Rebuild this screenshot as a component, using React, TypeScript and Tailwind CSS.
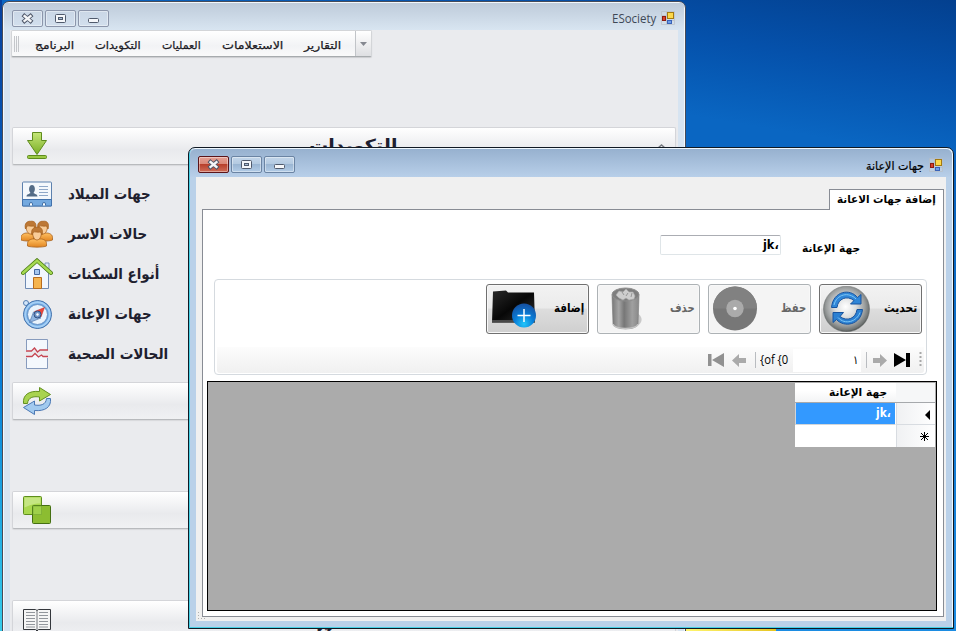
import { useLayoutEffect, useRef, useState } from "react";
import type { ReactNode } from "react";

const FONT = "font-['DejaVu_Sans','Noto_Sans',sans-serif]";

// A single-line label that is condensed or stretched to its column width.
function Label({ w, dir = "rtl", className = "", children }: { w: number; dir?: "rtl" | "ltr"; className?: string; children: ReactNode }) {
  const ref = useRef<HTMLSpanElement>(null);
  const [k, setK] = useState(1);
  useLayoutEffect(() => {
    if (ref.current) setK(w / ref.current.offsetWidth);
  }, [w]);
  return (
    <div dir="ltr" className={`shrink-0 whitespace-nowrap ${className}`} style={{ width: w }}>
      <span ref={ref} dir={dir} className="inline-block origin-left align-top" style={{ transform: `scaleX(${k})` }}>{children}</span>
    </div>
  );
}

function CaptionButton({ kind, active = false, dim = false }: { kind: "close" | "max" | "min"; active?: boolean; dim?: boolean }) {
  const tone = active
    ? "border-[#5b1419] bg-linear-to-b from-[#e5a094] via-[#d67f70] via-45% to-[#c8604f] bg-[linear-gradient(#e5a094,#da8878_45%,#b8402c_50%,#cf6d58)]"
    : dim
      ? "border-[#8c96ab] bg-linear-to-b from-[#cad7e6] to-[#d2dfed]"
      : "border-[#6b84a3] bg-[linear-gradient(#c3d6ea,#b4cae1_45%,#9bb6d3_50%,#b2cce7)]";
  return (
    <div className={`flex h-[17px] w-[31px] items-center justify-center rounded-[2px] border shadow-[inset_0_0_0_1px_#ffffff66] ${tone}`}>
      <svg width="13" height="11" viewBox="0 0 13 11" fill="none">
        {kind === "close" && (
          <g strokeLinecap="square">
            <path d="M3.500 3l6 5M9.500 3l-6 5" stroke="#4e5668" strokeWidth="4.200" />
            <path d="M3.500 3l6 5M9.500 3l-6 5" stroke="#f4f6f8" strokeWidth="2.300" />
          </g>
        )}
        {kind === "max" && (
          <g stroke="#505a6c">
            <rect x="1.500" y="1.500" width="10" height="8" rx="1" fill="#f5f7fa" />
            <rect x="4.500" y="4.500" width="4" height="2" fill="#a9bfd6" />
          </g>
        )}
        {kind === "min" && <rect x="1.500" y="5.500" width="10" height="4" rx="1" fill="#f5f7fa" stroke="#505a6c" />}
      </svg>
    </div>
  );
}

function FormIcon() {
  return (
    <svg width="14" height="14" viewBox="0 0 14 14">
      <path d="M.5 .5h13v13H.5zM.5 4.500h5M5.500 .5v13M5.500 9.500h8" fill="#d8dde3" fillOpacity=".5" stroke="#b9bfc6" opacity=".7" />
      <rect x="1.500" y="5.500" width="3" height="4" fill="#d8402a" stroke="#8d1c12" />
      <rect x="6.500" y="1.500" width="6" height="6" fill="#fbd84a" stroke="#a47a10" />
      <rect x="6.500" y="9.500" width="4" height="3" fill="#6f9fe8" stroke="#3a63b8" />
    </svg>
  );
}

const Contact = () => (
  <svg width="32" height="28" viewBox="0 0 32 28">
    <rect x="1.500" y="2" width="29" height="24" rx="1" fill="#f4f8fc" stroke="#5d81ae" />
    <path d="M1.500 19.500h29V26h-29z" fill="#74a9df" stroke="#4272ac" />
    <path d="M5.500 16.500c0-2.500 3-2.500 4-3.500-2.500-3-1.500-8 1.500-8s4 5 1.500 8c1 1 4 1 4 3.500z" fill="#536b86" />
    <path d="M18 6.500h9M18 9.500h9M18 12.500h9M18 15.500h9" stroke="#8fa8c8" />
    <path d="M8.500 25.500V24a1.500 1.500 0 0 1 3 0v1.500M21.500 25.500V24a1.500 1.500 0 0 1 3 0v1.500" fill="#fff" stroke="#3f6ea5" />
  </svg>
);

const Head = ({ x, y }: { x: number; y: number }) => (
  <g transform={`translate(${x} ${y})`} stroke="#a86320" strokeWidth=".8">
    <path d="M-6.500 19v-2.500c0-3 3-4.500 6-4.500h7c3 0 6 1.500 6 4.500V19c-3 1.500-16 1.500-19 0z" fill="url(#body)" />
    <path d="M-1.500 5c0 4.500 2 8 4.500 8s4.500-3.500 4.500-8" fill="#f8cc98" />
    <path d="M-2 8C-3.500 2 0 0 3 .3 7-.3 9.500 2 8 8L6.500 5C3 5.500 1 4.500-.5 5z" fill="#bd7835" />
  </g>
);
const People = () => (
  <svg width="32" height="28" viewBox="0 0 32 28">
    <defs><linearGradient id="body" x1="0" y1="0" x2="0" y2="1"><stop stopColor="#ffc062" /><stop offset="1" stopColor="#e18420" /></linearGradient></defs>
    <Head x={6.500} y={1} /><Head x={19} y={1} /><Head x={13} y={7} />
  </svg>
);

const House = () => (
  <svg width="32" height="32" viewBox="0 0 32 32">
    <path d="M24 5h4v10h-4z" fill="#dfe8f4" stroke="#7f97bb" />
    <path d="M4.500 15L16 4l11.500 11v15.500h-23z" fill="#f1f6fd" stroke="#6f8bb4" />
    <path d="M2 15L16 2.500 30 15" fill="none" stroke="#507e18" strokeWidth="4" strokeLinecap="round" />
    <path d="M2 15L16 2.500 30 15" fill="none" stroke="#a5da51" strokeWidth="2.400" strokeLinecap="round" />
    <path d="M13.500 11.500h5v5h-5z" fill="#a5c6ef" stroke="#4568a0" />
    <path d="M12.500 19.500h8v11h-8z" fill="#f5b44f" stroke="#b86d20" />
  </svg>
);

const Compass = () => (
  <svg width="32" height="32" viewBox="0 0 32 32">
    <circle cx="5" cy="5" r="2.500" fill="#d2e6fa" stroke="#557eb2" />
    <circle cx="16.500" cy="16.500" r="14" fill="#6ba5e0" stroke="#416fa9" />
    <circle cx="16.500" cy="16.500" r="12.200" fill="none" stroke="#a5cff5" strokeWidth="2" />
    <circle cx="16.500" cy="16.500" r="10" fill="#eaf3fc" stroke="#6992c4" />
    <path d="M23.500 9.500L20 19l-6.500-5.500z" fill="#e9473b" stroke="#c9291f" strokeWidth=".5" />
    <path d="M8.500 24.500L12.500 14l7.500 6z" fill="#91b5e1" stroke="#45699f" strokeWidth=".6" />
    <circle cx="16.500" cy="16.500" r="3.500" fill="#7194c7" stroke="#2f4e80" />
    <circle cx="16.500" cy="16.500" r="1.200" fill="#fff" />
  </svg>
);

const Health = () => (
  <svg width="32" height="32" viewBox="0 0 32 32">
    <path d="M5.500 1.500h21v11H19L16.500 15l-3-3.500-2 2h-6z" fill="#f4f8fd" />
    <path d="M5.500 18.500h6l3-3.500 3 4 3-2.500 1.500 2h4.500v12h-21z" fill="#f4f8fd" />
    <path d="M5.500 12V1.500h21V12M5.500 20v10.500h21V20" fill="none" stroke="#879bbd" />
    <path d="M5 13h5.500l3-3 3 4 2.500-2h8M5 18.500h6l3-3 3.500 3.500 3-2 1.500 1.500h5" fill="none" stroke="#c64552" strokeWidth="1.300" />
  </svg>
);

const Download = () => (
  <svg width="24" height="30" viewBox="0 0 24 30" stroke="#5e8b1d">
    <defs><linearGradient id="lime" x1="0" y1="0" x2="0" y2="1"><stop stopColor="#c6e778" /><stop offset="1" stopColor="#79ad25" /></linearGradient></defs>
    <path d="M7.500 .5h9v8h5L12 22.500 2.500 8.500h5z" fill="url(#lime)" />
    <rect x="2.500" y="23.500" width="19" height="3" rx="1" fill="#9ac844" />
  </svg>
);

const Sync = () => (
  <svg width="30" height="30" viewBox="0 0 30 30" strokeLinejoin="round">
    <path d="M1.500 17.500C.5 9 7 4.500 17.500 5.500v-4l11 7-11 6.500v-4C11 10 6 11.500 5.500 17.500z" fill="#a8d34f" stroke="#63901f" />
    <path d="M28.500 12.500C29.500 21 23 25.500 12.500 24.500v4L1.500 21.500l11-6.500v4C19 20 24 18.500 24.500 12.500z" fill="#a2caef" stroke="#4b78b4" />
  </svg>
);

const Squares = () => (
  <svg width="30" height="30" viewBox="0 0 30 30">
    <rect x="1.500" y="1.500" width="18" height="18" rx="1" fill="#a9d84f" stroke="#5d8d1c" />
    <path d="M2.500 2.500h16v6c-7 0-11 2-16 4z" fill="#c5e683" />
    <rect x="10.500" y="10.500" width="18" height="18" rx="1" fill="#8cbd31" stroke="#446f12" />
    <path d="M11 11h8.500v8.500H11z" fill="#9fd04b" stroke="#79a935" strokeWidth=".7" />
  </svg>
);

const Book = () => (
  <svg width="30" height="24" viewBox="0 0 30 24" fill="none">
    <path d="M1.500 1.500h12l1.500 1 1.500-1h12v20h-12L15 23l-1.500-1.500h-12z" fill="#f5f5f5" stroke="#34373c" />
    <path d="M15 2v20" stroke="#73777c" />
    <path d="M4 4.500h9M4 7.500h9M4 10.500h9M4 13.500h9M4 16.500h9M4 19h9M17 4.500h9M17 7.500h9M17 10.500h9M17 13.500h9M17 16.500h9M17 19h9" stroke="#92969c" />
  </svg>
);

const Refresh = () => (
  <svg width="48" height="46" viewBox="0 0 48 46">
    <defs><radialGradient id="orb" cx=".48" cy=".45" r=".56"><stop stopColor="#fff" /><stop offset=".4" stopColor="#dcdedf" /><stop offset=".75" stopColor="#9b9e9e" /><stop offset=".92" stopColor="#707473" /><stop offset="1" stopColor="#3f4443" /></radialGradient></defs>
    <ellipse cx="23.500" cy="23" rx="23" ry="22.800" fill="url(#orb)" stroke="#656968" strokeWidth=".5" />
    <path d="M8.500 21.500C10 5 27 2 34.500 11.500L38 8.500v9.500H27.500l3.500-3.500c-7-5.500-16-2-17 7z" fill="#2f86d8" stroke="#17539e" />
    <path d="M39.500 23.500C38 39 21 42 13.500 33.500L10 36.500v-10h10.500L17 30.500c7 5.500 16 2 17-7z" fill="#2b80d2" stroke="#17539e" />
    <path d="M11 19C13.500 8 26 5.500 33 13M37 26.500c-3 9-15 13-22 5" fill="none" stroke="#7ec7f5" />
  </svg>
);

const Disc = () => (
  <svg width="46" height="46" viewBox="0 0 46 46">
    <circle cx="23" cy="22.500" r="22" fill="#777" />
    <path d="M1 22.500a22 22 0 0 1 44 0l-22 0z" fill="#818181" />
    <circle cx="23" cy="22.500" r="8.700" fill="#aaa" /><circle cx="23" cy="22.500" r="1.800" fill="#fff" />
  </svg>
);

const Trash = () => (
  <svg width="34" height="44" viewBox="0 0 34 44">
    <defs><linearGradient id="can"><stop stopColor="#777" /><stop offset=".25" stopColor="#a5a5a5" /><stop offset=".45" stopColor="#777" /><stop offset=".75" stopColor="#a0a0a0" /><stop offset="1" stopColor="#888" /></linearGradient></defs>
    <path d="M27 26c7 4 7 12-6 16H10l17-8z" fill="#c9c9c9" />
    <path d="M2 8l1 29c1 6.500 24 6.500 25 0L29 8z" fill="url(#can)" stroke="#777" strokeWidth=".6" />
    <ellipse cx="15.500" cy="7.500" rx="13.500" ry="6.500" fill="#7e7e7e" stroke="#8e8e8e" />
    <path d="M6 8l3-4 4 1 3-3 3 3 4 0 2 4-1 3-5 1-3-2-3 2-4-2z" fill="#cdcdcd" stroke="#aaa" strokeWidth=".6" />
    <path d="M12 5l2 3M18 6l-2 3M22 6l-1 4" stroke="#969696" />
    <path d="M3 37c1 6 24 6 25 0" fill="none" stroke="#c4c4c4" strokeWidth="1.500" />
  </svg>
);

const FolderAdd = () => (
  <svg width="47" height="38" viewBox="0 0 47 38">
    <defs>
      <linearGradient id="folder" x1="0" y1="0" x2="1" y2="1"><stop stopColor="#292929" /><stop offset=".5" stopColor="#070707" /><stop offset="1" stopColor="#343434" /></linearGradient>
      <radialGradient id="plus" cx=".5" cy=".85" r=".8"><stop stopColor="#21c6fa" /><stop offset=".5" stopColor="#087dd8" /><stop offset="1" stopColor="#1553a4" /></radialGradient>
    </defs>
    <path d="M3 1.500l13-1 2 2h26l1 30H2z" fill="url(#folder)" />
    <path d="M2 30h43v2.500H2z" fill="#484848" />
    <circle cx="34" cy="25.500" r="12" fill="url(#plus)" />
    <path d="M34 19v13M27.500 25.500h13" stroke="#fff" strokeWidth="1.500" />
  </svg>
);

function Band({ children }: { children: ReactNode }) {
  return <div className="h-[38px] w-[664px] shrink-0 rounded-[2px] border border-[#d4d5d9] border-b-[#b8babd] bg-linear-to-b from-white via-[#e9eaed] via-60% to-[#f0f1f3] shadow-[0_1px_1px_#00000014]">{children}</div>;
}

const links: { w: number; text: string; icon: ReactNode }[] = [
  { w: 83, text: "جهات الميلاد", icon: <Contact /> },
  { w: 79, text: "حالات الاسر", icon: <People /> },
  { w: 91, text: "أنواع السكنات", icon: <House /> },
  { w: 84, text: "جهات الإعانة", icon: <Compass /> },
  { w: 100, text: "الحالات الصحية", icon: <Health /> },
];

function MainWindow() {
  return (
    <div className="absolute left-[2px] top-px h-[640px] w-[684px] overflow-hidden rounded-t-[7px] border border-[#464b59] bg-[#d7e4f1] shadow-[inset_0_0_0_1px_#f4f8fb]">
      <div className="mx-px mt-px flex h-[27px] items-start justify-between bg-linear-to-b from-[#becbda] to-[#d8e5f1] pl-2 pr-[9px]">
        <div className="flex gap-[2px] pt-[7px]"><CaptionButton kind="close" dim /><CaptionButton kind="max" dim /><CaptionButton kind="min" dim /></div>
        <div className="flex pt-2"><Label w={44} dir="ltr" className="mr-[5px] mt-px font-['Open_Sans','Noto_Sans',sans-serif] text-[12px] leading-[14px] text-[#3e4856]">ESociety</Label><FormIcon /></div>
      </div>
      <div className="ml-[7px] h-[610px] w-[668px] bg-[#eaebee] pl-px">
        <div className="flex h-[27px] w-[361px] rounded-[2px] border border-[#d3d5d8] border-b-[#a7abae] bg-linear-to-b from-white via-[#f2f3f5] via-60% to-[#fafafa] shadow-[0_1px_1px_#0002]">
          <div className="ml-[2px] mt-[5px] flex h-4 gap-px"><i className="w-px bg-[#c4c6ca]" /><i className="w-px bg-[#c4c6ca]" /><i className="w-px bg-[#c4c6ca]" /></div>
          <div className={`ml-[16px] mt-[7px] flex gap-[21px] text-[11px] leading-[16px] text-[#1c1b24] [-webkit-text-stroke:0.25px_#1c1b24] ${FONT}`}>
            <Label w={39}>البرنامج</Label><Label w={46}>التكويدات</Label><Label w={39}>العمليات</Label><Label w={61}>الاستعلامات</Label><Label w={37}>التقارير</Label>
          </div>
          <div className="ml-auto flex w-4 items-center justify-center border-l border-[#c1c4c8] bg-linear-to-b from-white to-[#dedfe2]"><svg width="7" height="4"><path d="M0 0h7L3.500 4z" fill="#858890" /></svg></div>
        </div>
        <div className="ml-px mt-[70px]">
          <Band><div className="flex pl-3 pt-1"><Download /><Label w={88} className={`ml-[260px] mt-0 text-[18px] font-bold leading-7 text-[#1e2030] ${FONT}`}>التكويدات</Label><svg className="ml-[260px] mt-[11px]" width="9" height="9" fill="none" stroke="#777b82" strokeWidth="1.500"><path d="M1 5l3.500-3L8 5M1 9l3.500-3L8 9" /></svg></div></Band>
          <div className="flex h-[217px] flex-col pl-[9px] pt-[9px]">
            {links.map((l) => <div key={l.text} className="flex h-10 items-center"><div className="mr-[14px] flex w-8 shrink-0 items-center">{l.icon}</div><Label w={l.w} className={`pl-px text-[15px] font-bold leading-5 text-[#20202e] ${FONT}`}>{l.text}</Label></div>)}
          </div>
          <Band><div className="pl-[9px] pt-[3px]"><Sync /></div></Band>
          <div className="h-[71px]" />
          <Band><div className="pl-[9px] pt-[3px]"><Squares /></div></Band>
          <div className="h-[71px]" />
          <Band><div className="flex pl-[9px] pt-[7px]"><Book /><Label w={30} className={`ml-[266px] mt-[-1px] text-[18px] font-bold leading-7 text-[#1e2030] ${FONT}`}>تقارير</Label></div></Band>
        </div>
      </div>
    </div>
  );
}

function ToolButton({ text, w, icon, disabled = false }: { text: string; w: number; icon: ReactNode; disabled?: boolean }) {
  return (
    <div className={`flex h-[50px] w-[103px] items-center rounded-[3px] border pl-[3px] pr-1 shadow-[inset_0_0_0_1px_#f8f8f8] ${disabled ? "border-[#adb2b5] bg-[#f4f4f4] text-[#666]" : "border-[#707070] bg-[linear-gradient(#f2f2f2,#ebebeb_48%,#dddddd_50%,#cfcfcf)] text-black"}`}>
      {icon}<Label w={w} className={`-mt-[3px] ml-auto text-[12px] font-bold leading-4 ${FONT}`}>{text}</Label>
    </div>
  );
}

function Dialog() {
  return (
    <div className="absolute left-[188px] top-[147px] h-[482px] w-[766px] rounded-t-[7px] border border-[#101923] bg-[#bad1e9] shadow-[inset_1px_-1px_0_#46d0e5,inset_-1px_1px_0_#eff8ff]">
      <div className="mx-px mt-px flex h-[28px] justify-between rounded-t-[6px] bg-linear-to-b from-[#97b1cf] to-[#b8cfe9] pl-2 pr-[9px]">
        <div className="flex gap-[2px] pt-[7px]"><CaptionButton kind="close" active /><CaptionButton kind="max" /><CaptionButton kind="min" /></div>
        <div className="flex pt-[9px]"><Label w={58} className={`mr-[5px] text-[11.500px] leading-4 text-black [-webkit-text-stroke:0.2px_#000] ${FONT}`}>جهات الإعانة</Label><FormIcon /></div>
      </div>
      <div className="ml-[7px] h-[444px] w-[750px] bg-[#f0f0f0] pl-[6px] pt-3">
        <div className="ml-[627px] h-[21px] w-[115px] border border-b-0 border-[#888c94] bg-white pl-[7px] pt-[2px]"><Label w={99} className={`text-[11px] font-bold leading-4 text-black ${FONT}`}>إضافة جهات الاعانة</Label></div>
        <div className="-mt-px h-[408px] w-[742px] border border-[#888c94] bg-white pl-1">
          <div className="ml-[623px] -mt-px h-px w-[113px] bg-white" />
          <div className="flex h-[69px] pl-[453px] pt-[25px]">
            <div className="h-[20px] w-[121px] rounded-[2px] border border-[#dfe5e8] border-t-[#abadb3] pl-[102px] pt-px"><Label w={16} dir="ltr" className={`text-[12px] font-bold leading-4 ${FONT}`}>jk،</Label></div>
            <Label w={58} className={`ml-[21px] mt-[6px] text-[11px] font-bold leading-4 ${FONT}`}>جهة الإعانة</Label>
          </div>
          <div className="ml-[7px] h-[96px] w-[713px] rounded-[4px] border border-[#d5dadf] pt-1">
            <div className="flex gap-2 pl-[271px]">
              <ToolButton text="إضافة" w={30} icon={<FolderAdd />} />
              <ToolButton text="حذف" w={25} disabled icon={<div className="ml-[9px]"><Trash /></div>} />
              <ToolButton text="حفظ" w={25} disabled icon={<Disc />} />
              <ToolButton text="تحديث" w={33} icon={<Refresh />} />
            </div>
            <div className="ml-[2px] mt-[13px] flex h-[26px] w-[707px] items-center rounded-b-[3px] bg-linear-to-b from-[#fcfcfc] to-[#f0f0f0] pl-[491px]">
              <svg width="16" height="14"><path d="M0 1h3.500v12H0zM16 0v14L4 7z" fill="#919191" /></svg>
              <svg className="ml-2" width="14" height="13"><path d="M0 6.500L7 0v4h7v5H7v4z" fill="#aaa" /></svg>
              <i className="ml-[9px] h-4 w-px bg-[#b9bcc0]" />
              <Label w={28} dir="ltr" className="ml-1 mb-px font-['Open_Sans','Noto_Sans',sans-serif] text-[12px] leading-4 text-black">{"{of {0"}</Label>
              <div className="ml-[5px] flex h-[23px] w-[68px] items-center bg-white pl-[60px]"><Label w={5} className={`text-[12px] leading-4 ${FONT}`}>١</Label></div>
              <i className="ml-[5px] h-4 w-px bg-[#b9bcc0]" />
              <svg className="ml-[6px]" width="14" height="13"><path d="M14 6.500L7 0v4H0v5h7v4z" fill="#aaa" /></svg>
              <svg className="ml-[7px]" width="17" height="14"><path d="M0 0v14l12-7V0h4v14h-4V7z" fill="#000" /></svg>
              <svg className="ml-[8px]" width="3" height="16"><path d="M1.500 0v16" stroke="#a9a9a9" strokeWidth="2" strokeDasharray="2 2" /></svg>
            </div>
          </div>
          <div className="mt-[6px] flex h-[230px] w-[730px] justify-end border border-black bg-[#ababab]">
            <div className="mr-px mt-px grid h-[64px] w-[140px] grid-cols-[101px_39px] grid-rows-[20px_22px_22px]">
              <div className="border-b border-[#a6a9ac] bg-linear-to-b from-white via-white via-40% to-[#f3f4f5] pl-[34px] pt-[2px]"><Label w={58} className={`text-[11px] font-bold leading-4 ${FONT}`}>جهة الإعانة</Label></div>
              <div className="border-b border-[#a6a9ac] bg-[#f6f7f8]" />
              <div className="border-x border-b border-r-white border-[#d1d5d9] bg-[#3399ff] pl-[80px] pt-[2px]"><Label w={15} dir="ltr" className={`text-[12px] font-bold leading-4 text-white ${FONT}`}>jk،</Label></div>
              <div className="flex items-center justify-end border-b border-l border-[#d8dce1] bg-linear-to-r from-[#f0f1f3] to-white pr-[5px] pt-[2px]"><svg width="5" height="10"><path d="M5 0v10L0 5z" /></svg></div>
              <div className="bg-white" />
              <div className="flex items-center justify-end border-l border-[#d8dce1] bg-linear-to-r from-[#f0f1f3] to-white pr-[6px]"><svg width="9" height="9" stroke="#000"><path d="M4.500 0v9M0 4.500h9M1 1l7 7M8 1l-7 7" /></svg></div>
            </div>
          </div>
        </div>
        <svg className="-ml-[4px] -mt-[5px]" width="8" height="8" fill="#b0b0b0"><path d="M0 0h1v1H0zM0 3h1v1H0zM0 6h1v1H0zM3 6h1v1H3zM6 6h1v1H6z" /></svg>
      </div>
    </div>
  );
}

export default function App() {
  return (
    <div className="relative h-[631px] w-[956px] overflow-hidden bg-linear-to-b from-[#054a9f] via-[#0962bd] via-30% to-[#1c8ce2]">
      <div className="h-[160px] w-full bg-linear-to-bl from-[#03408f] via-[#0551ab] via-25% to-[#0a66c2] to-50%" />
      <div className="absolute left-0 top-0 h-full w-[2px] bg-linear-to-b from-[#07409d] via-[#0574d4] via-55% to-[#35cceb]" />
      <div className="absolute bottom-0 left-[685px] h-2 w-[91px] bg-linear-to-r from-[#fff66d] to-[#e6c51e]" />
      <MainWindow />
      <Dialog />
    </div>
  );
}
